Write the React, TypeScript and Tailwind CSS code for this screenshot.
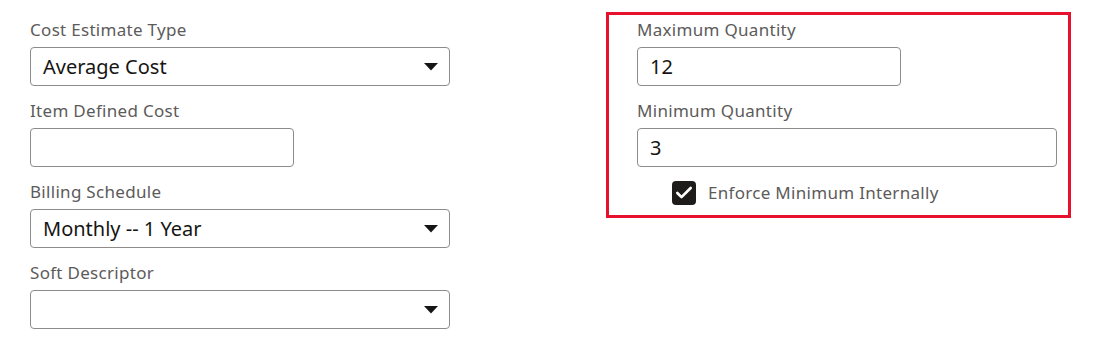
import { Check } from "lucide-react"

const font = { fontFamily: '"Noto Sans", "Open Sans", sans-serif' }

function Caret() {
  return (
    <svg width="14" height="8" viewBox="0 0 14 8" className="shrink-0">
      <path d="M0 0 L14 0 L7 7.5 Z" fill="#161513" />
    </svg>
  )
}

function Field({ label, children }: { label: string; children: React.ReactNode }) {
  return (
    <div className="flex flex-col">
      <label className="text-[17px] leading-6 tracking-[0.3px] text-[#5c5b5a]">{label}</label>
      <div className="mt-[5px]">{children}</div>
    </div>
  )
}

function SelectBox({ value, width }: { value: string; width: string }) {
  return (
    <div className={`${width} h-[39px] flex items-center justify-between pl-[12px] pr-[11px] border border-[#8d8c8b] rounded-[4px] bg-white`}>
      <span className="text-[20px] leading-none text-[#161513]">{value}</span>
      <Caret />
    </div>
  )
}

function TextBox({ value, width }: { value: string; width: string }) {
  return (
    <div className={`${width} h-[39px] flex items-center pl-[12px] border border-[#8d8c8b] rounded-[4px] bg-white`}>
      <span className="text-[20px] leading-none text-[#161513]">{value}</span>
    </div>
  )
}

export default function App() {
  return (
    <div className="w-[1120px] h-[360px] bg-white flex items-start" style={font}>
      {/* left column */}
      <div className="ml-[30px] mt-[18px] w-[420px] flex flex-col gap-[13px]">
        <Field label="Cost Estimate Type">
          <SelectBox value="Average Cost" width="w-[420px]" />
        </Field>
        <Field label="Item Defined Cost">
          <TextBox value="" width="w-[264px]" />
        </Field>
        <Field label="Billing Schedule">
          <SelectBox value="Monthly -- 1 Year" width="w-[420px]" />
        </Field>
        <Field label="Soft Descriptor">
          <SelectBox value="" width="w-[420px]" />
        </Field>
      </div>

      {/* highlighted right column */}
      <div className="ml-[156px] mt-[12px] w-[465px] border-[3px] border-[#e8112d] pt-[3px] pl-[28px] pr-[11px] pb-[10px] flex flex-col gap-[13px]">
        <Field label="Maximum Quantity">
          <TextBox value="12" width="w-[264px]" />
        </Field>
        <div className="flex flex-col">
          <Field label="Minimum Quantity">
            <TextBox value="3" width="w-[420px]" />
          </Field>
          <div className="mt-[14px] ml-[35px] flex items-center gap-[12px]">
            <div className="w-[24px] h-[24px] rounded-[4px] bg-[#1d1c1b] flex items-center justify-center">
              <Check className="w-[20px] h-[20px] text-white" strokeWidth={3.2} />
            </div>
            <span className="text-[17px] leading-6 tracking-[0.3px] text-[#5c5b5a]">Enforce Minimum Internally</span>
          </div>
        </div>
      </div>
    </div>
  )
}
